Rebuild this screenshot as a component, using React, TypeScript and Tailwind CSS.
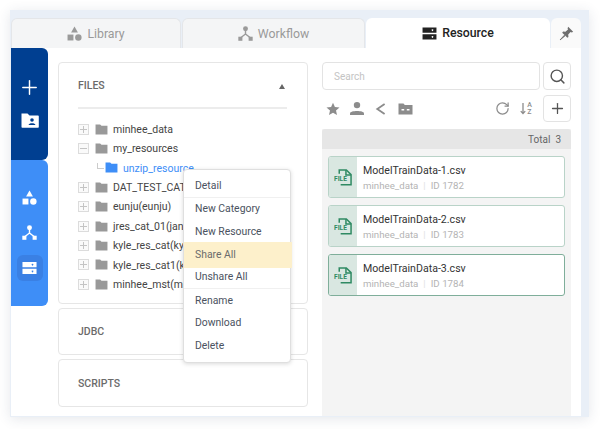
import React from 'react';
import { Plus, Search, RotateCw } from 'lucide-react';

const ShapesIcon = ({ className }: { className?: string }) => (
  <svg viewBox="0 0 14 14" className={className} fill="currentColor">
    <path d="M7 0.5 L10.2 6 L3.8 6 Z" />
    <rect x="0.5" y="8" width="5.5" height="5.5" />
    <circle cx="10.6" cy="10.7" r="3" />
  </svg>
);

const FlowIcon = ({ className }: { className?: string }) => (
  <svg viewBox="0 0 14 14" className={className} fill="currentColor">
    <circle cx="7" cy="2.6" r="2.3" />
    <rect x="0.3" y="10" width="3.8" height="3.8" />
    <rect x="9.9" y="10" width="3.8" height="3.8" />
    <path d="M7 4 V7.5 M7 7.5 L2.5 11 M7 7.5 L11.5 11" stroke="currentColor" strokeWidth="1.3" fill="none" />
  </svg>
);

const ServerIcon = ({ className }: { className?: string }) => (
  <svg viewBox="0 0 16 14" className={className}>
    <path fill="currentColor" fillRule="evenodd" d="M0.5 0.5 H15.5 V6.3 H0.5 Z M11.2 2.5 a0.9 0.9 0 1 0 0.01 0 Z M0.5 7.7 H15.5 V13.5 H0.5 Z M11.2 9.7 a0.9 0.9 0 1 0 0.01 0 Z" />
  </svg>
);

const FolderIcon = ({ className }: { className?: string }) => (
  <svg viewBox="0 0 14 12" className={className} fill="currentColor">
    <path d="M0.5 0.5 H5.5 L7 2 H13.5 V11.5 H0.5 Z" />
  </svg>
);

const FolderUserIcon = ({ className }: { className?: string }) => (
  <svg viewBox="0 0 18 15" className={className}>
    <path fill="#fff" d="M0.5 0.5 H6.5 L8.5 2.5 H17 a0.8 0.8 0 0 1 0.8 0.8 V14 a0.8 0.8 0 0 1 -0.8 0.8 H1.3 a0.8 0.8 0 0 1 -0.8 -0.8 Z" />
    <circle cx="11" cy="7" r="1.8" fill="#003f91" />
    <path d="M7.6 12 C7.6 9.6 14.4 9.6 14.4 12 Z" fill="#003f91" />
  </svg>
);

const FileIcon = () => (
  <svg viewBox="0 0 20 18" className="w-[19px] h-[17px]">
    <path d="M5.5 5 V1 H13 L18 6 V16.6 H7" fill="none" stroke="#2f8a63" strokeWidth="1.6" />
    <path d="M12.6 1 V6.4 H18" fill="none" stroke="#2f8a63" strokeWidth="1.6" />
    <text x="0" y="12.8" fontSize="7" fontWeight="700" fill="#2f8a63" fontFamily="Roboto, sans-serif">FILE</text>
  </svg>
);

const Tab = ({ icon, label, active }: { icon: React.ReactNode; label: string; active?: boolean }) => (
  <div
    className={
      active
        ? 'flex-1 flex items-center justify-center gap-[5px] bg-white rounded-t-[6px] text-[12.3px] font-medium text-[#222]'
        : 'flex-1 flex items-center justify-center gap-[5px] bg-[#f4f5f6] border-t border-x border-[#e4e6e9] rounded-t-[6px] text-[12.3px] text-[#9a9a9a]'
    }
  >
    {icon}
    <span className="pt-px">{label}</span>
  </div>
);

const TreeRow = ({ label, open }: { label: string; open?: boolean }) => (
  <div className="h-[19.4px] flex items-center">
    <span className="relative w-[11px] h-[11px] border border-[#dcdcdc] bg-[#fafafa] shrink-0">
      <span className="absolute left-[1px] right-[1px] top-[4px] h-px bg-[#c4c4c4]" />
      {!open && <span className="absolute top-[1px] bottom-[1px] left-[4px] w-px bg-[#c4c4c4]" />}
    </span>
    <FolderIcon className="w-[13px] h-[11px] text-[#999] ml-[6px] shrink-0" />
    <span className="ml-[5px] pt-px text-[10.5px] text-[#444] whitespace-nowrap">{label}</span>
  </div>
);

const MenuItem = ({ label, active, divided }: { label: string; active?: boolean; divided?: boolean }) => {
  if (active) {
    return (
      <div className="relative h-[26px] -my-[1.6px] -mr-[2px] pl-[11px] flex items-center bg-[#fdf0cb] text-[10.4px] text-[#6b6b6b]">
        {label}
      </div>
    );
  }
  return (
    <div className={`h-[22.8px] px-[11px] flex items-center text-[10.4px] text-[#4a5260] ${divided ? 'border-b border-[#f0f0f0]' : ''}`}>
      {label}
    </div>
  );
};

const Accordion = ({ title, className }: { title: string; className: string }) => (
  <div className={`border border-[#e6e6e6] rounded-[4px] bg-white px-[19px] pt-px flex items-center text-[10.5px] font-medium text-[#6b6b6b] ${className}`}>
    {title}
  </div>
);

const FileCard = ({ name, id, selected }: { name: string; id: number; selected?: boolean }) => (
  <div
    className={
      selected
        ? 'h-[42px] flex border-[1.5px] border-[#7fae9a] rounded-[3px] overflow-hidden bg-white'
        : 'h-[42px] flex border border-[#b9d3c8] rounded-[3px] overflow-hidden bg-white'
    }
  >
    <div className="w-[28px] bg-[#d9e7e1] flex items-center justify-center shrink-0">
      <FileIcon />
    </div>
    <div className="pl-[6px] pt-[6px]">
      <div className="text-[10.6px] leading-[15px] text-[#333]">{name}</div>
      <div className="text-[9.7px] leading-[15px] text-[#b4b4b4]">
        minhee_data<span className="text-[#e2e2e2] mx-[5px]">|</span>ID {id}
      </div>
    </div>
  </div>
);

export default function App() {
  return (
    <div className="w-[600px] h-[429px] bg-white pl-[10px] pt-[10px] overflow-hidden" style={{ fontFamily: 'Roboto, sans-serif' }}>
      <div className="w-[579px] h-[407px] bg-[#e9eff7] pl-px pr-2 pt-2 pb-px flex flex-col shadow-[0_2px_12px_rgba(40,60,90,0.12)]">
        <div className="h-[30px] flex gap-px shrink-0">
          <div className="w-[170px] flex">
            <Tab icon={<ShapesIcon className="w-[15px] h-[15px]" />} label="Library" />
          </div>
          <div className="w-[183px] flex">
            <Tab icon={<FlowIcon className="w-[15px] h-[15px]" />} label="Workflow" />
          </div>
          <div className="w-[184px] flex">
            <Tab icon={<ServerIcon className="w-[15px] h-[13px] text-[#222]" />} label="Resource" active />
          </div>
          <div className="w-[30px] bg-[#fafafa] rounded-t-[6px] flex items-center justify-center">
            <svg viewBox="0 0 14 14" className="w-[15px] h-[15px] text-[#6f6f6f]" fill="currentColor">
              <path d="M8.6 0.8 L13.2 5.4 L12 6 L10.8 5.6 L8.6 8 L8.8 10.2 L7.8 11 L3 6.2 L3.8 5.2 L6 5.4 L8.4 3.2 L8 2 Z" />
              <path d="M5 8.6 L1 13 L5.6 9.2 Z" stroke="currentColor" strokeWidth="0.8" />
            </svg>
          </div>
        </div>

        <div className="flex-1 flex bg-white min-h-0">
          <div className="w-[37px] shrink-0 flex flex-col h-[258px]">
            <div className="h-[112px] bg-[#003f91] rounded-tr-[6px] rounded-br-[6px] flex flex-col items-center pt-[28px] gap-[14px]">
              <Plus className="w-[23px] h-[23px] text-white" strokeWidth={1.5} />
              <FolderUserIcon className="w-[18px] h-[15px]" />
            </div>
            <div className="flex-1 bg-[#3e8ef7] rounded-tr-[6px] rounded-br-[6px] flex flex-col items-center pt-[30px]">
              <ShapesIcon className="w-[15px] h-[15px] text-white" />
              <FlowIcon className="w-[15px] h-[15px] text-white mt-[20px]" />
              <div className="w-[26px] h-[26px] mt-[15px] rounded-[6px] bg-[#3a80e4] flex items-center justify-center">
                <ServerIcon className="w-[15px] h-[14px] text-white" />
              </div>
            </div>
          </div>

          <div className="w-[250px] shrink-0 ml-[10px] pt-[14px] flex flex-col gap-[4px] relative">
            <div className="h-[242px] border border-[#e6e6e6] rounded-[4px] pl-[19px] pr-[20px] flex flex-col">
              <div className="h-[46px] pt-[2px] border-b-2 border-[#ececec] flex items-center justify-between shrink-0">
                <span className="text-[10.5px] font-medium text-[#6b6b6b]">FILES</span>
                <span className="w-0 h-0 border-x-[3.5px] border-x-transparent border-b-[5px] border-b-[#666] mr-[2px]" />
              </div>
              <div className="pt-[10.5px]">
                <TreeRow label="minhee_data" />
                <TreeRow label="my_resources" open />
                <div className="h-[19.4px] flex items-center pl-[19px]">
                  <span className="w-[7px] h-[6px] border-l border-b border-[#ccc] mb-[3px]" />
                  <FolderIcon className="w-[13px] h-[11px] text-[#3e8ef7] ml-[1px] shrink-0" />
                  <span className="ml-[5px] pt-px text-[10.5px] text-[#3e8ef7] whitespace-nowrap">unzip_resource</span>
                </div>
                <TreeRow label="DAT_TEST_CAT" />
                <TreeRow label="eunju(eunju)" />
                <TreeRow label="jres_cat_01(jan" />
                <TreeRow label="kyle_res_cat(ky" />
                <TreeRow label="kyle_res_cat1(k" />
                <TreeRow label="minhee_mst(m" />
              </div>
            </div>
            <Accordion title="JDBC" className="h-[47px]" />
            <Accordion title="SCRIPTS" className="h-[48px]" />

            <div className="absolute left-[125px] top-[121px] w-[108px] h-[194px] bg-white border border-[#dfdfdf] rounded-[4px] shadow-[0_1px_4px_rgba(0,0,0,0.15)] pt-[5px]">
              <MenuItem label="Detail" divided />
              <MenuItem label="New Category" />
              <MenuItem label="New Resource" />
              <MenuItem label="Share All" active />
              <MenuItem label="Unshare All" divided />
              <MenuItem label="Rename" />
              <MenuItem label="Download" />
              <MenuItem label="Delete" />
            </div>
          </div>

          <div className="w-[249px] shrink-0 ml-[14px] pt-[14px] flex flex-col">
            <div className="flex gap-[3px] h-[28px] shrink-0">
              <div className="flex-1 border border-[#e3e3e3] rounded-[4px] px-[11px] flex items-center text-[10px] text-[#c4c4c4]">Search</div>
              <div className="w-[28px] border border-[#e3e3e3] rounded-[4px] flex items-center justify-center">
                <Search className="w-[17px] h-[17px] text-[#555]" strokeWidth={2} />
              </div>
            </div>
            <div className="h-[27px] mt-[5px] flex items-center shrink-0">
              <svg viewBox="0 0 14 14" className="w-[14px] h-[14px] text-[#8c8c8c] ml-[4px]" fill="currentColor">
                <path d="M7 0.8 L8.9 5 L13.5 5.4 L10 8.5 L11 13 L7 10.7 L3 13 L4 8.5 L0.5 5.4 L5.1 5 Z" />
              </svg>
              <svg viewBox="0 0 16 14" className="w-[16px] h-[15px] text-[#8c8c8c] ml-[9px]" fill="currentColor">
                <circle cx="8" cy="3.6" r="3.2" />
                <path d="M1 13.6 V12 C1 8.8 15 8.8 15 12 V13.6 Z" />
              </svg>
              <svg viewBox="0 0 12 14" className="w-[11px] h-[14px] text-[#8c8c8c] ml-[10px]" fill="none" stroke="currentColor" strokeWidth="2">
                <path d="M10.5 1.5 L2.5 7 L10.5 12.5" />
              </svg>
              <svg viewBox="0 0 15 12" className="w-[15px] h-[12px] text-[#8c8c8c] ml-[12px]" fill="currentColor">
                <path fillRule="evenodd" d="M0.5 0.5 H5.5 L6.8 2 H14.5 V11.5 H0.5 Z M3.5 6 V7.4 H6.2 V6 Z M8.8 6 V7.4 H11.5 V6 Z" />
              </svg>
              <RotateCw className="w-[15px] h-[15px] text-[#8c8c8c] ml-auto" strokeWidth={2} />
              <div className="flex items-center ml-[10px] text-[#8c8c8c]">
                <svg viewBox="0 0 6 14" className="w-[6px] h-[13px]" fill="none" stroke="currentColor" strokeWidth="1.4">
                  <path d="M3 1 V12.5 M0.6 9.8 L3 12.5 L5.4 9.8" />
                </svg>
                <span className="flex flex-col text-[7px] leading-[7px] font-medium ml-px">
                  <span>A</span>
                  <span>Z</span>
                </span>
              </div>
              <div className="w-[28px] h-[27px] ml-[11px] border border-[#e3e3e3] rounded-[4px] flex items-center justify-center">
                <Plus className="w-[17px] h-[17px] text-[#555]" strokeWidth={1.8} />
              </div>
            </div>
            <div className="mt-[7px] flex-1 bg-[#f4f4f4] flex flex-col">
              <div className="h-[20px] bg-[#e6e6e6] rounded-t-[3px] flex items-center justify-end pr-[10px] text-[10px] text-[#666] shrink-0">
                Total<span className="ml-[5px]">3</span>
              </div>
              <div className="px-[6px] pt-[7px] flex flex-col gap-[7px]">
                <FileCard name="ModelTrainData-1.csv" id={1782} />
                <FileCard name="ModelTrainData-2.csv" id={1783} />
                <FileCard name="ModelTrainData-3.csv" id={1784} selected />
              </div>
            </div>
          </div>
        </div>
      </div>
    </div>
  );
}
